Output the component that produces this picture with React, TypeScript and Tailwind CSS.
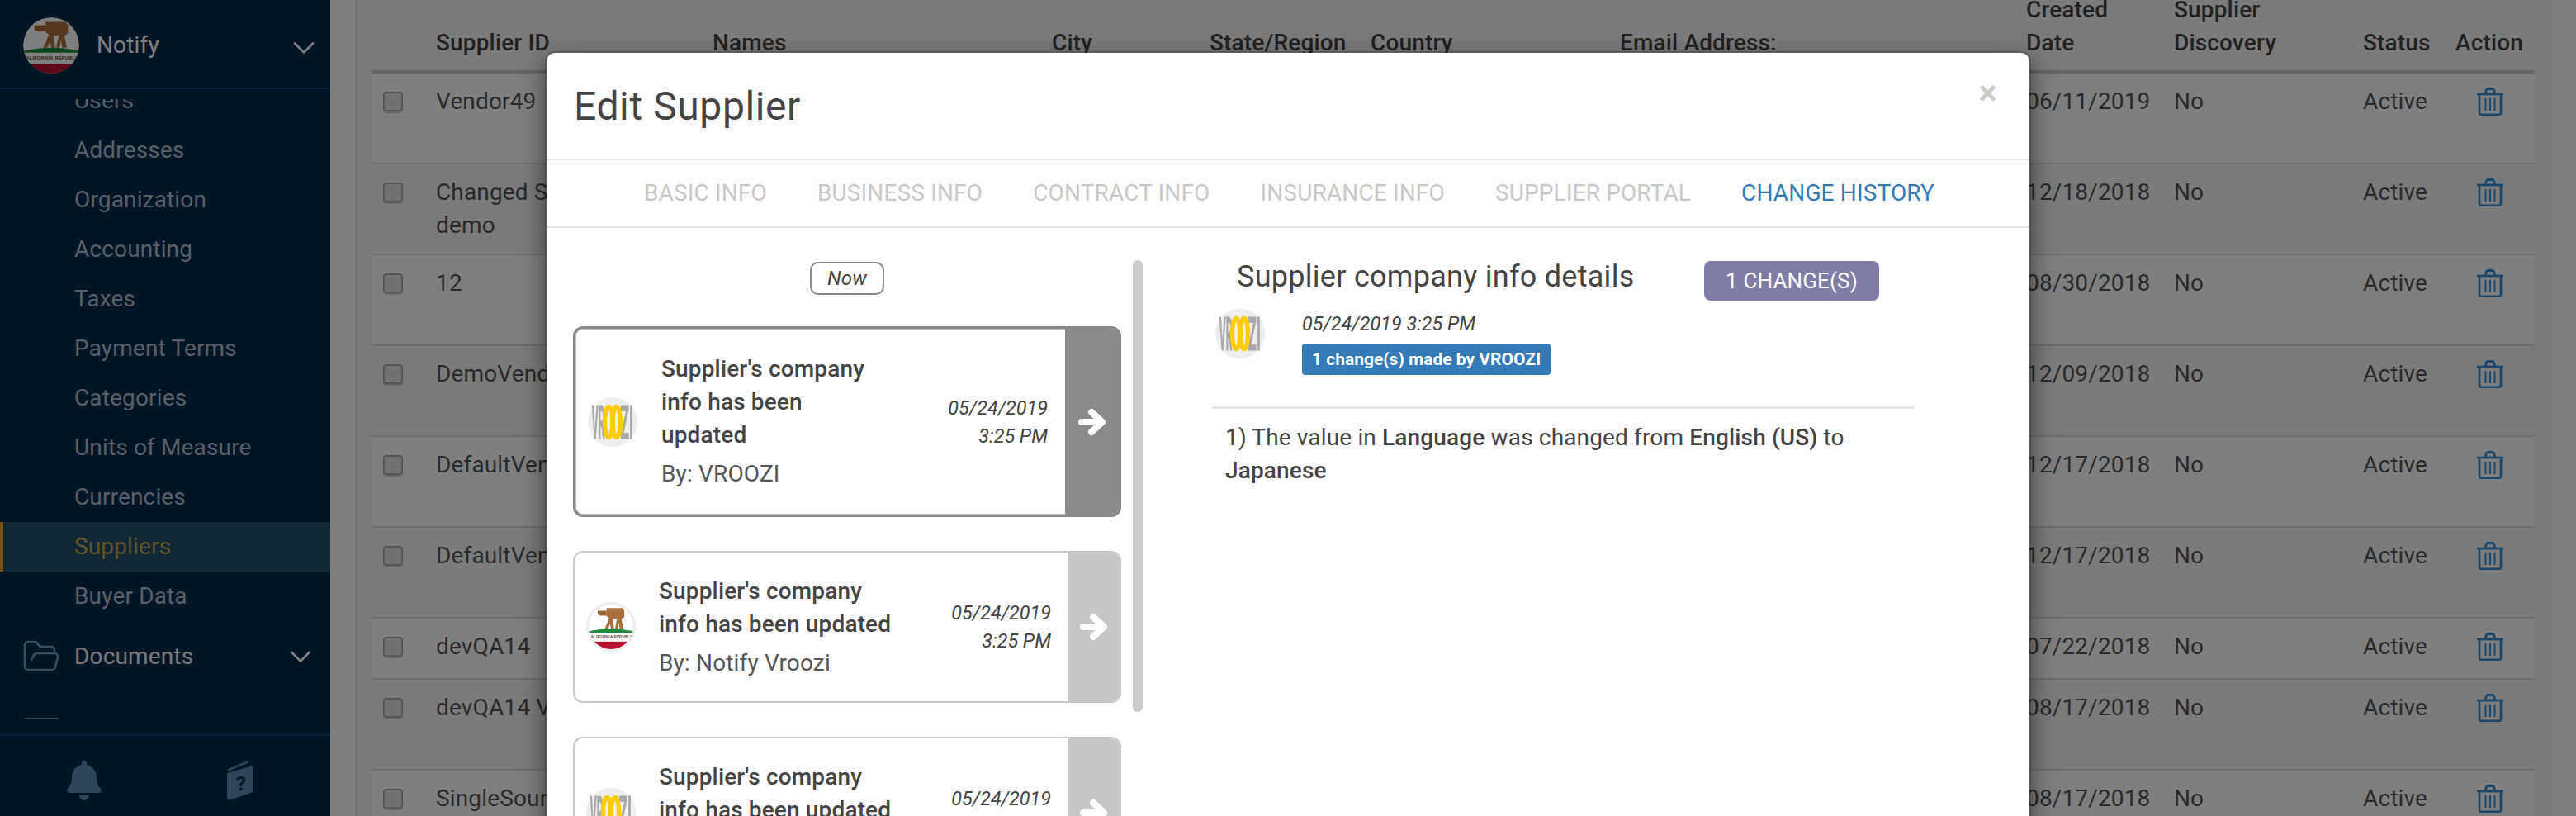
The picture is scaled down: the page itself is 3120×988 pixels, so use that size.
import React from 'react';
import { ChevronDown, FolderOpen } from 'lucide-react';
import { FaBell } from 'react-icons/fa';

const menu = ['Users', 'Addresses', 'Organization', 'Accounting', 'Taxes', 'Payment Terms', 'Categories', 'Units of Measure', 'Currencies', 'Suppliers', 'Buyer Data'];

const rows = [
  { id: 'Vendor49', date: '06/11/2019', tall: true },
  { id: 'Changed Supplier demo', date: '12/18/2018', tall: true },
  { id: '12', date: '08/30/2018', tall: true },
  { id: 'DemoVendor', date: '12/09/2018', tall: true },
  { id: 'DefaultVendor', date: '12/17/2018', tall: true },
  { id: 'DefaultVendor', date: '12/17/2018', tall: true },
  { id: 'devQA14', date: '07/22/2018', tall: false },
  { id: 'devQA14 Vendor', date: '08/17/2018', tall: true },
  { id: 'SingleSource', date: '08/17/2018', tall: true },
];

const tabs = ['BASIC INFO', 'BUSINESS INFO', 'CONTRACT INFO', 'INSURANCE INFO', 'SUPPLIER PORTAL', 'CHANGE HISTORY'];

const gridCols = 'grid grid-cols-[78px_335px_411px_191px_195px_302px_492px_179px_229px_112px_96px]';

function CaliforniaLogo({ ring }: { ring?: boolean }) {
  return (
    <svg viewBox="0 0 100 100" className="h-full w-full">
      <defs>
        <clipPath id="ca-clip">
          <circle cx="50" cy="50" r="50" />
        </clipPath>
      </defs>
      {ring && <circle cx="50" cy="50" r="50" fill="#eeeeee" />}
      <g transform={ring ? 'translate(5 5) scale(0.9)' : undefined}>
        <g clipPath="url(#ca-clip)">
          <rect width="100" height="100" fill="#ffffff" />
          <path d="M40 8h36l4 6v14l-5 4H48l-8-6z" fill="#a8703e" />
          <path d="M20 14h20v11H27l-7-3z" fill="#9c6535" />
          <path d="M46 30h8l3 24h-7l-2-10-5 10h-7l7-16zM64 30h9l5 24h-8l-3-13-2 13h-6z" fill="#a8703e" />
          <path d="M0 60q50-12 100 0v3H0z" fill="#1f8a3c" />
          <text x="50" y="76" textAnchor="middle" fontSize="9.500" fontWeight="700" fill="#6b5a48" fontFamily="Roboto, sans-serif">
            CALIFORNIA REPUBLIC
          </text>
          <rect y="83" width="100" height="17" fill="#bb1133" />
        </g>
      </g>
    </svg>
  );
}

function VroozLogo() {
  return (
    <svg viewBox="0 0 100 100" className="h-full w-full">
      <circle cx="50" cy="50" r="50" fill="#eeeeee" />
      <g className="blur-[0.6px]">
        <text x="8" y="84" fontSize="92" fontWeight="700" textLength="26" lengthAdjust="spacingAndGlyphs" fontFamily="Roboto, sans-serif" fill="#a8a8a8" stroke="#a8a8a8" strokeWidth="1.500">
          VR
        </text>
        <text x="66" y="84" fontSize="92" fontWeight="700" textLength="26" lengthAdjust="spacingAndGlyphs" fontFamily="Roboto, sans-serif" fill="#a8a8a8" stroke="#a8a8a8" strokeWidth="1.500">
          ZI
        </text>
        <ellipse cx="42" cy="50" rx="8" ry="31" fill="none" stroke="#ffcc00" strokeWidth="9" />
        <ellipse cx="58" cy="50" rx="8" ry="31" fill="none" stroke="#ffcc00" strokeWidth="9" />
      </g>
    </svg>
  );
}

function TrashIcon() {
  return (
    <svg viewBox="0 0 32 34" className="h-[34px] w-[32px]" fill="none" stroke="#3b8fd6" strokeWidth="2.800">
      <path d="M0 8h32" />
      <path d="M10 8l1.500-5q.5-1.500 2-1.500h5q1.500 0 2 1.500L22 8" />
      <path d="M3 8v22q0 3 3 3h20q3 0 3-3V8" />
      <path d="M10.500 13v15M16 13v15M21.500 13v15" strokeWidth="2" />
    </svg>
  );
}

function BookIcon() {
  return (
    <svg viewBox="0 0 31 48" className="h-[48px] w-[31px]">
      <path d="M1 10L25 0v3L1 13z" fill="#5c8ab0" />
      <path d="M0 15L31 6v32L3 48l-3-2z" fill="#5c8ab0" />
      <text x="17" y="36" textAnchor="middle" fontSize="24" fontWeight="700" fontFamily="Roboto, sans-serif" fill="#022c48">
        ?
      </text>
    </svg>
  );
}

function CardArrow() {
  return (
    <svg viewBox="0 0 34 34" className="h-[34px] w-[34px]" fill="none" stroke="#ffffff" strokeWidth="8" strokeLinecap="round" strokeLinejoin="round">
      <path d="M4 17h22" />
      <path d="M16 5l13 12-13 12" />
    </svg>
  );
}

function Sidebar() {
  return (
    <aside className="flex h-full w-[400px] shrink-0 flex-col bg-[#022c48] text-[28px] leading-[40px] tracking-[0.15px]">
      <div className="flex h-[108px] shrink-0 items-center border-b-2 border-[#0f4468] pl-[28px] pr-[10px] pt-[3px]">
        <div className="h-[68px] w-[68px] overflow-hidden rounded-full">
          <CaliforniaLogo />
        </div>
        <span className="ml-[21px] text-white">Notify</span>
        <ChevronDown className="ml-auto mt-[7px] text-white" size={44} strokeWidth={1.4} />
      </div>
      <div className="mt-[12px] h-[751px] shrink-0 overflow-hidden">
        <ul className="-mt-[28px]">
          {menu.map(item => (
            <li
              key={item}
              className={`flex h-[60px] items-center ${item === 'Suppliers' ? 'border-l-4 border-[#eeaa22] bg-[#26506c] pl-[86px] text-[#c4a854]' : 'pl-[90px] text-[#aebfcc]'}`}
            >
              {item}
            </li>
          ))}
        </ul>
        <div className="mt-[13px] flex h-[60px] items-center pl-[26px] pr-[14px] text-white">
          <FolderOpen className="text-[#6e9cc0]" size={48} strokeWidth={1.3} />
          <span className="ml-[16px] text-[#f0f0f0]">Documents</span>
          <ChevronDown className="ml-auto text-white" size={44} strokeWidth={1.4} />
        </div>
        <div className="ml-[30px] mt-[44px] h-[2px] w-[40px] bg-[#6e9cc0]" />
      </div>
      <div className="mt-[18px] flex flex-1 items-start border-t-2 border-[#0f4468] pt-[30px]">
        <FaBell className="ml-[78px] text-[#5c8ab0]" size={48} />
        <div className="ml-[149px]">
          <BookIcon />
        </div>
      </div>
    </aside>
  );
}

function SupplierTable() {
  return (
    <main className="flex-1 bg-white pl-[30px] pr-[30px]">
      <div className="h-full border-l-2 border-[#e4e4e4] bg-[#f6f6f6] pl-[18px] pr-[20px] text-[28px] leading-[40px] tracking-[0.15px] text-[#555555]">
        <div className={`${gridCols} h-[89px] content-end items-end border-b-4 border-[#cccccc] pb-[13px] font-medium text-[#444444]`}>
          <span />
          <span>Supplier ID</span>
          <span>Names</span>
          <span>City</span>
          <span>State/Region</span>
          <span>Country</span>
          <span>Email Address:</span>
          <span>Created<br />Date</span>
          <span>Supplier<br />Discovery</span>
          <span>Status</span>
          <span>Action</span>
        </div>
        {rows.map((row, i) => (
          <div
            key={i}
            className={`${gridCols} ${row.tall ? 'h-[110px]' : 'h-[74px]'} border-b-2 border-[#dddddd] pt-[14px] ${i % 2 === 0 ? 'bg-white' : 'bg-[#f6f6f6]'}`}
          >
            <div className="ml-[14px] mt-[8px] h-[24px] w-[24px] rounded-[4px] border-2 border-[#aaaaaa] bg-[#e2e2e2] shadow-[0_2px_0_#cfcfcf]" />
            <div className="pr-[90px]">{row.id}</div>
            <div />
            <div />
            <div />
            <div />
            <div />
            <div>{row.date}</div>
            <div>No</div>
            <div>Active</div>
            <div className="ml-[26px] mt-[3px]">
              <TrashIcon />
            </div>
          </div>
        ))}
      </div>
    </main>
  );
}

function HistoryCard({ active, logo }: { active?: boolean; logo: 'vroozi' | 'notify' }) {
  return (
    <div className={`flex overflow-hidden rounded-[12px] bg-white ${active ? 'h-[231px] border-[3px] border-[#888888] shadow-[inset_0_0_0_1px_#bbbbbb]' : 'h-[184px] border-2 border-[#c8c8c8]'}`}>
      <div className={`flex flex-1 items-center ${active ? 'pl-[15px] pr-[21px]' : 'pl-[14px] pr-[21px]'}`}>
        <div className="h-[60px] w-[60px] shrink-0">
          {logo === 'vroozi' ? <VroozLogo /> : <CaliforniaLogo ring />}
        </div>
        <div className={active ? 'ml-[29px] w-[270px]' : 'ml-[28px] w-[290px]'}>
          <div className="font-medium leading-[40px]">Supplier's company info has been updated</div>
          <div className="mt-[7px] leading-[40px] text-[#555555]">By: {logo === 'vroozi' ? 'VROOZI' : 'Notify Vroozi'}</div>
        </div>
        <div className="ml-auto text-right text-[23.4px] italic leading-[34px] tracking-normal text-[#444444]">
          05/24/2019
          <br />
          3:25 PM
        </div>
      </div>
      <div className={`flex shrink-0 items-center justify-center ${active ? 'w-[65px] bg-[#8a8a8a]' : 'w-[62px] bg-[#c6c6c6]'}`}>
        <CardArrow />
      </div>
    </div>
  );
}

function EditSupplierModal() {
  return (
    <div className="absolute left-[660px] top-[62px] h-[1200px] w-[1800px] rounded-[12px] border-2 border-black/20 bg-white bg-clip-padding text-[28px] leading-[40px] tracking-[0.15px] text-[#444444] shadow-[0_10px_30px_rgba(0,0,0,0.5)]">
      <div className="relative flex h-[130px] items-center border-b-2 border-[#e5e5e5] pl-[33px] pt-[2px]">
        <h1 className="text-[48px] font-normal leading-[56px] tracking-[0.6px]">Edit Supplier</h1>
        <span className="absolute right-[39px] top-[28px] text-[42px] font-bold leading-[42px] text-[#cccccc]">×</span>
      </div>
      <nav className="flex h-[82px] items-center justify-center gap-[61px] border-b-2 border-[#e5e5e5] pl-[3px]">
        {tabs.map(tab => (
          <span key={tab} className={tab === 'CHANGE HISTORY' ? 'text-[#337ab7]' : 'text-[#c8c8c8]'}>
            {tab}
          </span>
        ))}
      </nav>
      <div className="relative flex">
        <div className="w-[806px] shrink-0 pl-[32px]">
          <div className="w-[664px]">
            <div className="flex justify-center pt-[41px]">
              <span className="flex h-[40px] w-[90px] items-center justify-center rounded-[10px] border-2 border-[#888888] text-[24px] italic">Now</span>
            </div>
            <div className="mt-[38px] flex flex-col gap-[41px]">
              <HistoryCard active logo="vroozi" />
              <HistoryCard logo="notify" />
              <HistoryCard logo="vroozi" />
            </div>
          </div>
          <div className="absolute left-[710px] top-[39px] h-[547px] w-[12px] rounded-[6px] bg-[#cccccc]" />
        </div>
        <div className="w-[851px] pt-[40px]">
          <div className="flex items-start pl-[30px]">
            <h2 className="-mt-[1px] w-[566px] text-[36px] font-normal leading-[40px] tracking-[0.28px]">Supplier company info details</h2>
            <span className="flex h-[48px] w-[212px] items-center justify-center rounded-[8px] bg-[#7f7ca8] text-[26px] text-white">1 CHANGE(S)</span>
          </div>
          <div className="ml-[4px] mt-[10px] flex">
            <div className="h-[60px] w-[60px]">
              <VroozLogo />
            </div>
            <div className="ml-[45px]">
              <div className="text-[23.4px] italic leading-[36px] tracking-normal">05/24/2019 3:25 PM</div>
              <span className="mt-[6px] flex h-[38px] w-[301px] items-center justify-center rounded-[4px] bg-[#337ab7] text-[21px] font-bold leading-none tracking-normal text-white">
                1 change(s) made by VROOZI
              </span>
            </div>
          </div>
          <hr className="mt-[38px] h-[3px] border-0 bg-[#e5e5e5]" />
          <p className="mt-[15px] pl-[16px] pr-[60px]">
            1) The value in <b className="font-medium">Language</b> was changed from <b className="font-medium">English (US)</b> to <b className="font-medium">Japanese</b>
          </p>
        </div>
      </div>
    </div>
  );
}

export default function App() {
  return (
    <div className="relative flex h-[988px] w-[3120px] overflow-hidden [font-family:Roboto,sans-serif]">
      <Sidebar />
      <SupplierTable />
      <div className="absolute inset-0 bg-black/50" />
      <EditSupplierModal />
    </div>
  );
}
